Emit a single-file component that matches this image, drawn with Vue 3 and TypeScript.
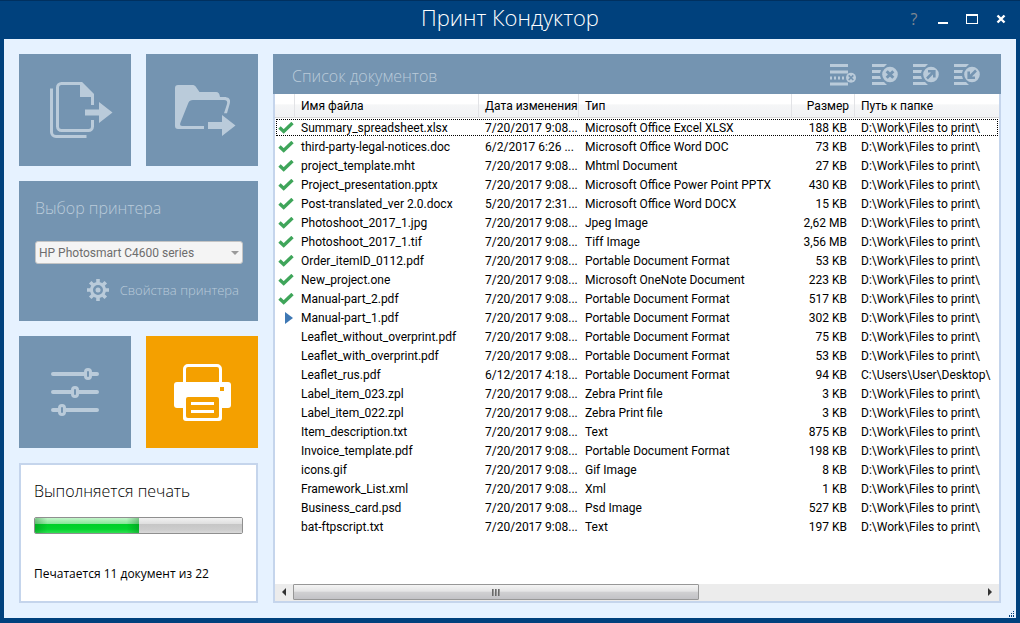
<script setup lang="ts">
import { ref } from 'vue'

type Status = 'done' | 'active' | 'queued'

interface DocumentRow {
  name: string
  date: string
  type: string
  size: string
  path: string
  status: Status
}

const PDF = 'Portable Document Format'
const WORK = 'D:\\Work\\Files to print\\'
const RECENT = '7/20/2017 9:08...'

const doc = (
  name: string,
  type: string,
  size: string,
  status: Status = 'queued',
  date: string = RECENT,
  path: string = WORK,
): DocumentRow => ({ name, date, type, size, path, status })

const documents: DocumentRow[] = [
  doc('Summary_spreadsheet.xlsx', 'Microsoft Office Excel XLSX', '188 KB', 'done'),
  doc('third-party-legal-notices.doc', 'Microsoft Office Word DOC', '73 KB', 'done', '6/2/2017 6:26 ...'),
  doc('project_template.mht', 'Mhtml Document', '27 KB', 'done'),
  doc('Project_presentation.pptx', 'Microsoft Office Power Point PPTX', '430 KB', 'done'),
  doc('Post-translated_ver 2.0.docx', 'Microsoft Office Word DOCX', '15 KB', 'done', '5/20/2017 2:31...'),
  doc('Photoshoot_2017_1.jpg', 'Jpeg Image', '2,62 MB', 'done'),
  doc('Photoshoot_2017_1.tif', 'Tiff Image', '3,56 MB', 'done'),
  doc('Order_itemID_0112.pdf', PDF, '53 KB', 'done'),
  doc('New_project.one', 'Microsoft OneNote Document', '223 KB', 'done'),
  doc('Manual-part_2.pdf', PDF, '517 KB', 'done'),
  doc('Manual-part_1.pdf', PDF, '302 KB', 'active'),
  doc('Leaflet_without_overprint.pdf', PDF, '75 KB'),
  doc('Leaflet_with_overprint.pdf', PDF, '53 KB'),
  doc('Leaflet_rus.pdf', PDF, '94 KB', 'queued', '6/12/2017 4:18...', 'C:\\Users\\User\\Desktop\\'),
  doc('Label_item_023.zpl', 'Zebra Print file', '3 KB'),
  doc('Label_item_022.zpl', 'Zebra Print file', '3 KB'),
  doc('Item_description.txt', 'Text', '875 KB'),
  doc('Invoice_template.pdf', PDF, '198 KB'),
  doc('icons.gif', 'Gif Image', '8 KB'),
  doc('Framework_List.xml', 'Xml', '1 KB'),
  doc('Business_card.psd', 'Psd Image', '527 KB'),
  doc('bat-ftpscript.txt', 'Text', '197 KB'),
]

const focused = ref(0)
const printer = ref('HP Photosmart C4600 series')
const current = 11
</script>

<template>
  <div class="window">
    <header class="titlebar">
      <h1>Принт Кондуктор</h1>
      <div class="window-controls">
        <button type="button" class="help" aria-label="Справка">?</button>
        <button type="button" aria-label="Свернуть">
          <svg width="12" height="12" viewBox="0 0 12 12"><path d="M1 9h10v2H1z" fill="#fff" /></svg>
        </button>
        <button type="button" aria-label="Развернуть">
          <svg width="12" height="12" viewBox="0 0 12 12"><path d="M0 1h12v10H0zM1 3v7h10V3z" fill="#fff" fill-rule="evenodd" /></svg>
        </button>
        <button type="button" aria-label="Закрыть">
          <svg width="12" height="12" viewBox="0 0 12 12"><path d="M2.5 2.5l7 7M9.5 2.5l-7 7" stroke="#fff" stroke-width="2.4" /></svg>
        </button>
      </div>
    </header>

    <main class="content">
      <aside class="sidebar">
        <button type="button" class="tile" aria-label="Добавить файлы">
          <svg viewBox="0 0 112 112" fill="none">
            <path class="line" stroke-width="3" d="M32.500 34.500V78a4.500 4.500 0 0 0 4.500 4.500H67.500" />
            <path class="line" stroke-width="3" d="M73.500 51V41L62 29.500H42.500a4 4 0 0 0-4 4V72.500a4 4 0 0 0 4 4H69.500a4 4 0 0 0 4-4V66" />
            <path class="shape" d="M61 28h2L75 40v3H61z" />
            <path class="shape" d="M66 55.500h14v-7.500L93.500 58.500 80 69v-7.500H66z" />
          </svg>
        </button>
        <button type="button" class="tile" aria-label="Добавить папку">
          <svg viewBox="0 0 112 112" fill="none">
            <path class="shape" fill-rule="evenodd" d="M32 31H46c2 0 3 .6 4 2l3.500 5H70c2.500 0 3.500 1.500 4 5h4c4.500 0 7 2 5.800 6.500L81 59.300h-3L81 50c.8-2.600-.4-4-3-4H47c-2.500 0-3.700.7-4.700 3L34.500 68.500c-1 2.400-.2 3.500 2 3.500H58v3H32c-2 0-3-1-3-3V34c0-2 1-3 3-3z" />
            <path class="shape" d="M62 68h14v-7L89.500 71.500 76 82v-7H62z" />
          </svg>
        </button>

        <section class="printer-panel">
          <h2><label for="printer">Выбор принтера</label></h2>
          <div class="select-box">
            <select id="printer" v-model="printer">
              <option>HP Photosmart C4600 series</option>
            </select>
          </div>
          <button type="button" class="properties">
            <svg width="22" height="22" viewBox="0 0 22 22" fill="none" stroke="#bacbda">
              <circle cx="11" cy="11" r="6.500" stroke-width="3" />
              <circle cx="11" cy="11" r="2.500" fill="#bacbda" stroke="none" />
              <path stroke-width="3.600" d="M11 0v4M11 18v4M0 11h4M18 11h4M3.200 3.200l2.900 2.900M15.900 15.900l2.900 2.900M3.200 18.800l2.900-2.900M15.900 6.100l2.900-2.900" />
            </svg>
            <span>Свойства принтера</span>
          </button>
        </section>

        <button type="button" class="tile" aria-label="Настройки">
          <svg viewBox="0 0 112 112" fill="none">
            <path class="line" stroke-width="4" stroke-linecap="round" d="M34 38H65M73 38h5M34 56H52M60 56H78M34 74h5M47 74H78" />
            <rect class="line" stroke-width="3" x="66.500" y="33.500" width="5" height="9" rx="2.500" />
            <rect class="line" stroke-width="3" x="53.500" y="51.500" width="5" height="9" rx="2.500" />
            <rect class="line" stroke-width="3" x="40.500" y="69.500" width="5" height="9" rx="2.500" />
          </svg>
        </button>
        <button type="button" class="tile print" aria-label="Печать">
          <svg viewBox="0 0 112 112" fill="none">
            <path d="M38.500 48V33a3.500 3.500 0 0 1 3.500-3.500H71a3.500 3.500 0 0 1 3.500 3.500V48" stroke="#fff" stroke-width="3" />
            <rect x="28" y="46" width="57" height="26" rx="3" fill="#fff" />
            <rect x="37" y="58" width="39" height="27" rx="3" fill="#fff" />
            <rect x="40" y="61" width="33" height="21" rx="2" fill="#f4a000" />
            <path d="M74 51h4v4h-4z" fill="#f4a000" />
            <path d="M45 66h23v3H45zM45 74h23v3H45z" fill="#fff" />
          </svg>
        </button>

        <section class="progress-panel">
          <h2 id="progress-title">Выполняется печать</h2>
          <progress :value="current" :max="documents.length" aria-labelledby="progress-title"></progress>
          <p>Печатается {{ current }} документ из {{ documents.length }}</p>
        </section>
      </aside>

      <section class="list-panel">
        <header class="list-header">
          <h2>Список документов</h2>
          <div class="tools">
            <button type="button" aria-label="Удалить строку">
              <svg width="28" height="22" viewBox="0 0 28 22" fill="none">
                <path class="shape" d="M0 0h18v3H0zM0 6.500h18v3H0zM0 18.500h18v3H0z" />
                <path class="line" stroke-width="3" stroke-dasharray="2 2" d="M0 14h16" />
                <circle class="shape" cx="21" cy="13.700" r="5" />
                <path class="cut" stroke-width="1.600" d="M18.700 11.400l4.600 4.600M23.300 11.400l-4.600 4.600" />
              </svg>
            </button>
            <button type="button" aria-label="Очистить список">
              <svg width="28" height="22" viewBox="0 0 28 22" fill="none">
                <path class="shape" d="M1 0h15l-3 3H1zM1 6h9l-1 3H1zM1 12h8l1 3H1zM1 18h12l3 3H1z" />
                <circle class="shape" cx="19" cy="10.500" r="7.800" />
                <path class="cut" stroke-width="3" d="M15.700 7.200l6.600 6.600M22.300 7.200l-6.600 6.600" />
              </svg>
            </button>
            <button type="button" aria-label="Экспорт списка">
              <svg width="28" height="22" viewBox="0 0 28 22" fill="none">
                <path class="shape" d="M1 0h15l-3 3H1zM1 6h9l-1 3H1zM1 12h8l1 3H1zM1 18h12l3 3H1z" />
                <circle class="shape" cx="19" cy="10.500" r="7.800" />
                <path class="cut" stroke-width="2.600" d="M15 14.500l6-6M16 7.300h6.300v6.300" />
              </svg>
            </button>
            <button type="button" aria-label="Импорт списка">
              <svg width="28" height="22" viewBox="0 0 28 22" fill="none">
                <path class="shape" d="M1 0h15l-3 3H1zM1 6h9l-1 3H1zM1 12h8l1 3H1zM1 18h12l3 3H1z" />
                <circle class="shape" cx="19" cy="10.500" r="7.800" />
                <path class="cut" stroke-width="2.600" d="M23 6.500l-6 6M22 13.700h-6.300V7.400" />
              </svg>
            </button>
          </div>
        </header>

        <div class="list-body">
          <table>
            <colgroup>
              <col class="c-status" />
              <col class="c-name" />
              <col class="c-date" />
              <col class="c-type" />
              <col class="c-size" />
              <col />
            </colgroup>
            <thead>
              <tr>
                <th aria-label="Состояние"></th>
                <th>Имя файла</th>
                <th>Дата изменения</th>
                <th>Тип</th>
                <th class="size">Размер</th>
                <th>Путь к папке</th>
              </tr>
            </thead>
            <tbody>
              <tr v-for="(row, i) in documents" :key="row.name" :class="{ focused: i === focused }" @click="focused = i">
                <td class="status">
                  <svg v-if="row.status === 'done'" width="16" height="12" viewBox="0 0 16 12" fill="none">
                    <path d="M1.500 5.500l4.200 4L14.500 1" stroke="#3fa55a" stroke-width="3.400" />
                  </svg>
                  <svg v-else-if="row.status === 'active'" width="16" height="12" viewBox="0 0 16 12">
                    <path d="M7 0l8 6-8 6z" fill="#3e78b4" />
                  </svg>
                </td>
                <td>{{ row.name }}</td>
                <td>{{ row.date }}</td>
                <td>{{ row.type }}</td>
                <td class="size">{{ row.size }}</td>
                <td>{{ row.path }}</td>
              </tr>
            </tbody>
          </table>

          <div class="scrollbar">
            <button type="button" class="arrow" aria-label="Прокрутить влево">
              <svg width="4" height="8" viewBox="0 0 4 8"><path d="M4 0v8L0 4z" fill="#333" /></svg>
            </button>
            <div class="track">
              <div class="thumb"><i></i><i></i><i></i></div>
            </div>
            <button type="button" class="arrow" aria-label="Прокрутить вправо">
              <svg width="4" height="8" viewBox="0 0 4 8"><path d="M0 0v8l4-4z" fill="#333" /></svg>
            </button>
          </div>
        </div>
      </section>

      <svg class="grip" width="6" height="6" viewBox="0 0 6 6">
        <path d="M0 4h1v2H0zM2 2h1v1H2zM2 4h1v2H2zM4 0h1v1H4zM4 2h1v1H4zM4 4h1v2H4z" fill="#003f7a" />
      </svg>
    </main>
  </div>
</template>

<style>
body {
  margin: 0;
}
</style>

<style scoped>
.window {
  box-sizing: border-box;
  min-height: 100vh;
  display: flex;
  flex-direction: column;
  padding: 0 4px 5px;
  background: #00417d;
  border-top: 1px solid #00305f;
  color: #000;
  font: 12px/19px "Open Sans", "Noto Sans", sans-serif;
}

button {
  padding: 0;
  border: 0;
  background: none;
  color: inherit;
  font: inherit;
  cursor: pointer;
}

svg {
  display: block;
}

h1,
h2,
p {
  margin: 0;
  font-weight: 300;
}

.titlebar {
  display: grid;
  grid-template-columns: 1fr auto 1fr;
  align-items: start;
  height: 38px;
  color: #fff;
}

h1 {
  grid-column: 2;
  font-size: 22px;
  line-height: 32px;
}

.window-controls {
  justify-self: end;
  display: flex;
  gap: 5px;
  padding: 6px 3px 0 0;
}

.window-controls button {
  width: 24px;
  height: 24px;
  display: grid;
  place-items: center;
}

.window-controls .help {
  color: #7f8791;
  font-size: 16px;
}

.content {
  position: relative;
  flex: 1;
  display: flex;
  gap: 15px;
  padding: 15px;
  background: #e6f2ff;
}

.sidebar {
  flex: none;
  display: grid;
  grid-template-columns: repeat(2, 112px);
  grid-template-rows: 112px 140px 112px 1fr;
  gap: 15px;
}

.tile {
  background: #7494b1;
}

.tile.print {
  background: #f4a000;
}

.line {
  stroke: #bacbda;
}

.shape {
  fill: #bacbda;
}

.cut {
  stroke: #7494b1;
}

h2 {
  font-size: 16px;
  line-height: 24px;
}

.printer-panel {
  grid-column: 1 / 3;
  display: flex;
  flex-direction: column;
  padding: 15px 15px 0 16px;
  background: #7494b1;
  color: #bacbda;
}

.select-box {
  position: relative;
  margin-top: 21px;
}

.select-box::after {
  content: "";
  position: absolute;
  right: 4px;
  top: 10px;
  border: 4px solid transparent;
  border-top-color: #9a9a9a;
  border-bottom: 0;
  pointer-events: none;
}

select {
  appearance: none;
  display: block;
  box-sizing: border-box;
  width: 100%;
  height: 23px;
  padding: 0 16px 0 3px;
  border: 1px solid #c4c4c4;
  border-radius: 3px;
  background: #f4f4f4;
  color: #6d6d6d;
  font-family: Roboto, "Open Sans", sans-serif;
  font-size: 12px;
}

.properties {
  align-self: flex-end;
  display: flex;
  align-items: center;
  gap: 11px;
  margin: 15px 4px 0 0;
  font-size: 13px;
  line-height: 22px;
  font-weight: 300;
}

.progress-panel {
  grid-column: 1 / 3;
  display: flex;
  flex-direction: column;
  padding: 14px 13px;
  border: 2px solid #c5d5ec;
  background: #fff;
}

.progress-panel p {
  margin-top: 30px;
  font-weight: 400;
}

progress {
  appearance: none;
  display: block;
  box-sizing: border-box;
  width: 100%;
  height: 17px;
  margin-top: 14px;
  border: 1px solid #8f8f8f;
  border-radius: 2px;
  overflow: hidden;
}

progress::-webkit-progress-bar {
  background: linear-gradient(#f2f2f2, #dedede 40%, #c6c6c6 41%, #cdcdcd 80%, #dadada);
}

progress::-webkit-progress-value {
  background:
    linear-gradient(90deg, rgba(0, 110, 20, 0.35), transparent 12%, transparent 88%, rgba(0, 110, 20, 0.35)),
    linear-gradient(#c4f5cb, #86e696 40%, #00cf28 41%, #04d42e 75%, #2fe052);
}

.list-panel {
  flex: 1;
  min-width: 0;
  display: flex;
  flex-direction: column;
}

.list-header {
  display: flex;
  align-items: center;
  justify-content: space-between;
  height: 40px;
  padding: 0 20px 0 19px;
  background: #7494b1;
  color: #bacbda;
}

.list-header h2 {
  padding-top: 4px;
}

.tools {
  display: flex;
  gap: 13px;
  padding-top: 2px;
}

.list-body {
  flex: 1;
  display: flex;
  flex-direction: column;
  justify-content: space-between;
  border: 2px solid #c5d5ec;
  border-top: 0;
  background: #fff;
}

table {
  width: 100%;
  table-layout: fixed;
  border-collapse: separate;
  border-spacing: 0;
  font-family: Roboto, "Open Sans", sans-serif;
}

.c-status {
  width: 20px;
}

.c-name {
  width: 184px;
}

.c-date {
  width: 100px;
}

.c-type {
  width: 213px;
}

.c-size {
  width: 63px;
}

th,
td {
  box-sizing: border-box;
  height: 19px;
  padding: 2px 0 0 6px;
  font-weight: 400;
  line-height: 17px;
  text-align: left;
  white-space: nowrap;
  overflow: hidden;
}

th {
  height: 24px;
  border-right: 1px solid #e2e3e6;
  border-bottom: 1px solid #d8d8d8;
  background: linear-gradient(#fff 45%, #f5f6f7 46%, #f1f2f4);
}

th:last-child {
  border-right: 0;
}

.size {
  padding: 2px 8px 0 0;
  text-align: right;
}

th.size {
  padding-right: 5px;
}

.status {
  padding: 0 0 0 3px;
}

.focused {
  outline: 1px dotted #000;
  outline-offset: -2px;
}

.scrollbar {
  display: flex;
  height: 16px;
  padding-bottom: 1px;
  background: #ececec;
}

.arrow {
  width: 18px;
  display: grid;
  place-items: center;
}

.track {
  flex: 1;
  display: flex;
}

.thumb {
  box-sizing: border-box;
  width: 59%;
  display: flex;
  align-items: center;
  justify-content: center;
  gap: 1px;
  border: 1px solid #979797;
  border-radius: 1px;
  background: linear-gradient(#f4f4f4, #e4e4e5 45%, #d0d0d2 50%, #c2c2c6);
}

.thumb i {
  width: 2px;
  height: 7px;
  background: linear-gradient(90deg, #555, #aaa);
}

.grip {
  position: absolute;
  right: 1px;
  bottom: 1px;
}
</style>
